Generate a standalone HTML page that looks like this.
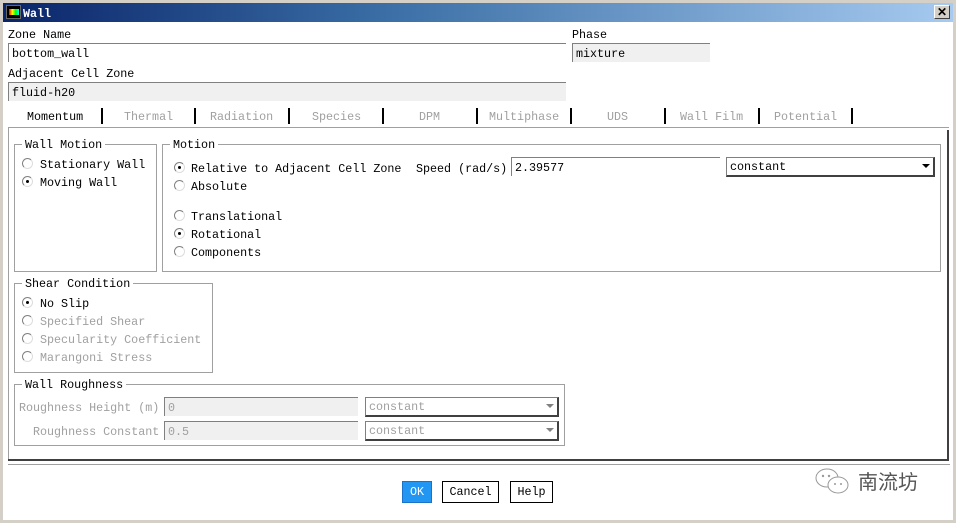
<!DOCTYPE html>
<html><head><meta charset="utf-8"><style>
*{margin:0;padding:0;box-sizing:border-box}
body{width:956px;height:523px;overflow:hidden;background:#d4d0c8;position:relative;font-family:"Liberation Mono","Noto Sans CJK SC",monospace;font-size:11.7px;color:#000;line-height:14px}
.a{position:absolute;white-space:nowrap;margin-top:2px}
.win{position:absolute;left:3px;top:3px;width:950px;height:517px;background:#fff;margin:0}
.title{position:absolute;left:3px;top:3px;width:950px;height:19px;background:linear-gradient(90deg,#0a246a,#3a6ea5 40%,#a6caf0)}
.inp{position:absolute;height:19px;border-top:1px solid #808080;border-left:1px solid #808080;padding-left:3px;padding-top:1px;line-height:18px;background:#fff}
.gr{background:#f0f0f0}
.dis{color:#a0a0a0}
.grp{position:absolute;border:1px solid #a0a0a0}
.lg{position:absolute;top:-7px;left:7px;background:#fff;padding:0 3px;line-height:14px}
.r{position:absolute;width:11px;height:11px;border-radius:50%;border:1px solid #808080;border-right-color:#ddd;border-bottom-color:#ddd;background:#fff}
.r.on::after{content:"";position:absolute;left:3px;top:3px;width:3px;height:3px;background:#000;border-radius:50%}
.sep{position:absolute;top:108px;width:2px;height:16px;background:#000}
.tab{position:absolute;top:110px;color:#a0a0a0;line-height:14px}
.sel{position:absolute;height:20px;border:1px solid #808080;border-right:2px solid #404040;border-bottom:2px solid #404040;padding-left:3px;line-height:18px;background:#fff}
.arr{position:absolute;right:3px;top:6px;width:0;height:0;border-left:4px solid transparent;border-right:4px solid transparent;border-top:4px solid #000}
.btn{position:absolute;top:481px;height:22px;border:1px solid #000;line-height:21px;text-align:center;background:#fff}
</style></head><body>
<div class="win"></div>
<div class="title"></div>
<div style="position:absolute;left:6px;top:5px;width:15px;height:14px;background:#000;border:1px solid #666"><div style="position:absolute;left:2px;top:3px;width:10px;height:6px;background:linear-gradient(90deg,#f00,#ff0,#0f0,#0ff)"></div></div>
<div class="a" style="left:23px;top:5px;color:#fff;font-weight:bold">Wall</div>
<div style="position:absolute;left:934px;top:5px;width:16px;height:14px;background:#d4d0c8;border:1px solid #fff;border-right-color:#404040;border-bottom-color:#404040;text-align:center;line-height:12px;font-weight:bold;font-family:'Liberation Sans',sans-serif;font-size:12px">✕</div>

<div class="a" style="left:8px;top:26px">Zone Name</div>
<div class="inp" style="left:8px;top:43px;width:558px">bottom_wall</div>
<div class="a" style="left:572px;top:26px">Phase</div>
<div class="inp gr" style="left:572px;top:43px;width:138px">mixture</div>
<div class="a" style="left:8px;top:65px">Adjacent Cell Zone</div>
<div class="inp gr" style="left:8px;top:82px;width:558px">fluid-h20</div>

<div class="tab" style="left:27px;color:#000">Momentum</div>
<div class="sep" style="left:101px"></div>
<div class="tab" style="left:124px">Thermal</div>
<div class="sep" style="left:194px"></div>
<div class="tab" style="left:210px">Radiation</div>
<div class="sep" style="left:288px"></div>
<div class="tab" style="left:312px">Species</div>
<div class="sep" style="left:382px"></div>
<div class="tab" style="left:419px">DPM</div>
<div class="sep" style="left:476px"></div>
<div class="tab" style="left:489px">Multiphase</div>
<div class="sep" style="left:570px"></div>
<div class="tab" style="left:607px">UDS</div>
<div class="sep" style="left:664px"></div>
<div class="tab" style="left:680px">Wall Film</div>
<div class="sep" style="left:758px"></div>
<div class="tab" style="left:774px">Potential</div>
<div class="sep" style="left:851px"></div>

<div style="position:absolute;left:8px;top:127px;width:1px;height:334px;background:#a0a0a0"></div>
<div style="position:absolute;left:8px;top:127px;width:941px;height:1px;background:#a0a0a0"></div>
<div style="position:absolute;left:947px;top:130px;width:2px;height:331px;background:#404040"></div>
<div style="position:absolute;left:8px;top:459px;width:941px;height:2px;background:#404040"></div>
<div style="position:absolute;left:8px;top:464px;width:942px;height:1px;background:#a0a0a0"></div>

<div class="grp" style="left:14px;top:144px;width:143px;height:128px"><span class="lg">Wall Motion</span></div>
<div class="r" style="left:22px;top:158px"></div><div class="a" style="left:40px;top:156px">Stationary Wall</div>
<div class="r on" style="left:22px;top:176px"></div><div class="a" style="left:40px;top:174px">Moving Wall</div>

<div class="grp" style="left:162px;top:144px;width:779px;height:128px"><span class="lg">Motion</span></div>
<div class="r on" style="left:174px;top:162px"></div><div class="a" style="left:191px;top:160px">Relative to Adjacent Cell Zone</div>
<div class="r" style="left:174px;top:180px"></div><div class="a" style="left:191px;top:178px">Absolute</div>
<div class="r" style="left:174px;top:210px"></div><div class="a" style="left:191px;top:208px">Translational</div>
<div class="r on" style="left:174px;top:228px"></div><div class="a" style="left:191px;top:226px">Rotational</div>
<div class="r" style="left:174px;top:246px"></div><div class="a" style="left:191px;top:244px">Components</div>
<div class="a" style="left:416px;top:160px">Speed (rad/s)</div>
<div class="inp" style="left:511px;top:157px;width:209px">2.39577</div>
<div class="sel" style="left:726px;top:157px;width:209px">constant<span class="arr"></span></div>

<div class="grp" style="left:14px;top:283px;width:199px;height:90px"><span class="lg">Shear Condition</span></div>
<div class="r on" style="left:22px;top:297px"></div><div class="a" style="left:40px;top:295px">No Slip</div>
<div class="r" style="left:22px;top:315px"></div><div class="a dis" style="left:40px;top:313px">Specified Shear</div>
<div class="r" style="left:22px;top:333px"></div><div class="a dis" style="left:40px;top:331px">Specularity Coefficient</div>
<div class="r" style="left:22px;top:351px"></div><div class="a dis" style="left:40px;top:349px">Marangoni Stress</div>

<div class="grp" style="left:14px;top:384px;width:551px;height:62px"><span class="lg">Wall Roughness</span></div>
<div class="a dis" style="left:19px;top:399px">Roughness Height (m)</div>
<div class="inp gr dis" style="left:164px;top:397px;width:194px">0</div>
<div class="sel dis" style="left:365px;top:397px;width:194px">constant<span class="arr" style="border-top-color:#808080"></span></div>
<div class="a dis" style="left:33px;top:423px">Roughness Constant</div>
<div class="inp gr dis" style="left:164px;top:421px;width:194px">0.5</div>
<div class="sel dis" style="left:365px;top:421px;width:194px">constant<span class="arr" style="border-top-color:#808080"></span></div>

<div class="btn" style="left:402px;width:30px;background:#2196f3;border-color:#1a73c8;color:#fff">OK</div>
<div class="btn" style="left:442px;width:57px">Cancel</div>
<div class="btn" style="left:510px;width:43px">Help</div>

<svg style="position:absolute;left:814px;top:466px" width="40" height="32" viewBox="0 0 40 32"><ellipse cx="13" cy="12" rx="11" ry="9" fill="#fff" stroke="#999"/><ellipse cx="24" cy="19" rx="10" ry="8" fill="#fff" stroke="#999"/><circle cx="9" cy="10" r="1.2" fill="#999"/><circle cx="15" cy="10" r="1.2" fill="#999"/><circle cx="21" cy="18" r="1" fill="#999"/><circle cx="27" cy="18" r="1" fill="#999"/></svg>
<div style="position:absolute;left:858px;top:468px;font-family:'Noto Sans CJK SC',sans-serif;font-size:20px;color:#555;line-height:26px">南流坊</div>
</body></html>
